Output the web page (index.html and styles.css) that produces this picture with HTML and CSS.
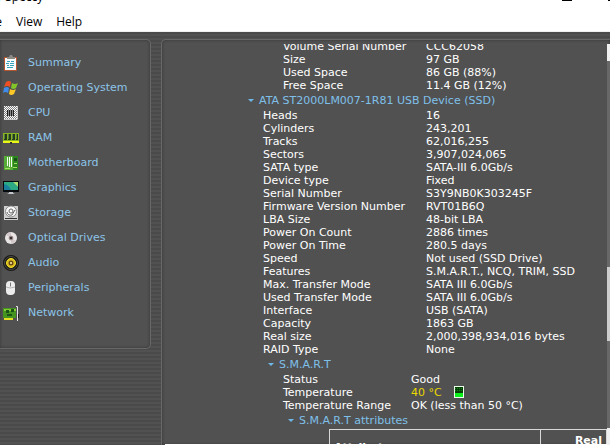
FILE: index.html
```html
<!DOCTYPE html>
<html lang="en">

<head>
    <meta charset="utf-8">
    <title>Speccy</title>
    <meta name="viewport" content="width=device-width, initial-scale=1">
    <link rel="stylesheet" href="styles.css">
</head>

<body>
    <header class="titlebar">
        <span class="title">y Speccy</span>
        <span class="window-controls"><i class="minimize"></i><i class="maximize"></i></span>
    </header>
    <nav class="menubar">
        <button type="button">File</button>
        <button type="button">View</button>
        <button type="button">Help</button>
    </nav>

    <div class="workspace">
        <nav class="panel sidebar">
            <a href="#summary">
                <svg viewBox="0 0 16 16">
                    <path d="M1 2h13v14H1z" fill="#b5552d" />
                    <path d="M2 3h11v12H2z" fill="#f6fafc" />
                    <path d="M4 2h2l1-2h2l1 2h2v2H4z" fill="#8b8b86" />
                    <path d="M4 6.500h3M8 6.500h3M3 8.500h3M7 8.500h4M4 10.500h2M7 10.500h4M4 12.500h6" stroke="#36a3bd" />
                </svg>
                Summary
            </a>
            <a href="#os">
                <svg viewBox="0 0 16 16">
                    <path d="M3 2q3-2 5 0L7 7Q4 5 1 7z" fill="#ee4f22" />
                    <path d="M9 3q3 2 6 0l-2 5q-3 2-5 0z" fill="#83c428" />
                    <path d="M1 8q3-2 5 0l-1 5q-3-2-5 0z" fill="#3f8de8" />
                    <path d="M7 9q3 2 6 0l-2 5q-3 2-5 0z" fill="#fcc827" />
                </svg>
                Operating System
            </a>
            <a href="#cpu">
                <svg viewBox="0 0 16 16">
                    <path d="M1 1h14v14H1z" fill="#808080" />
                    <path d="M1 1.500h13M1 3.500h13M1 5.500h13M1 7.500h13M1 9.500h13M1 11.500h13M1 13.500h13" stroke="#fff" stroke-dasharray="1 1" />
                    <path d="M2 2.500h12M2 4.500h12M2 6.500h12M2 8.500h12M2 10.500h12M2 12.500h12" stroke="#fff" stroke-dasharray="1 1" />
                    <path d="M4 5h7v6H4z" fill="#8a8a8a" />
                    <path d="M4.500 5v6M6.500 5v6M8.500 5v6M10.500 5v6" stroke="#222" />
                    <path d="M1 14.500h13M14.500 1v13" stroke="#c9c9c9" />
                </svg>
                CPU
            </a>
            <a href="#ram">
                <svg viewBox="0 0 16 16">
                    <path d="M0 3h16v8H0z" fill="#87b51f" />
                    <path d="M1 4h3v6H1zM5 4h3v6H5zM9 4h3v6H9zM13 4h2v6h-2z" fill="#263b19" />
                    <path d="M1.500 4v5M5.500 4v5M9.500 4v5M13.500 4v5" stroke="#587d48" />
                    <path d="M0 11h16v2H0z" fill="#eaf51b" />
                    <path d="M7 12h2v2H7z" fill="#333" />
                </svg>
                RAM
            </a>
            <a href="#motherboard">
                <svg viewBox="0 0 16 16">
                    <path d="M1 1h14v14H1z" fill="#2d8520" />
                    <path d="M1 1h9v14H1z" fill="#55ac37" />
                    <path d="M4.500 2v9M6.500 2v10M8.500 2v10" stroke="#f3ffed" />
                    <path d="M11 3h3v3h-3z" fill="#194e19" />
                    <path d="M2 13.500h5M11 8.500h3M10 12.500h4" stroke="#a8df61" />
                </svg>
                Motherboard
            </a>
            <a href="#graphics">
                <svg viewBox="0 0 16 16">
                    <path d="M0 1h16v11H0z" fill="#080b0d" />
                    <path d="M1 2h14v8H1z" fill="#187f9c" />
                    <path d="M1 2h8q3 1 6 6v2H8Q6 5 1 4z" fill="#2baa83" />
                    <path d="M10 2h5v5z" fill="#a5df70" />
                    <path d="M6 12h4v1l2 1H4l2-1z" fill="#c2c6ca" />
                </svg>
                Graphics
            </a>
            <a href="#storage">
                <svg viewBox="0 0 16 16">
                    <path d="M1 1h14v14H1z" fill="#cfcfcf" />
                    <path d="M2 13h12v1H2z" fill="#333" />
                    <circle cx="8" cy="6.500" r="5.500" fill="#f8f8f8" stroke="#8a8a8a" />
                    <circle cx="8" cy="6" r="2" fill="#fff" stroke="#666" />
                    <path d="M4 7q1 4 5 3l3-5" fill="none" stroke="#666" />
                </svg>
                Storage
            </a>
            <a href="#optical">
                <svg viewBox="0 0 16 16">
                    <circle cx="8" cy="8" r="6" fill="#e9e5e5" />
                    <path d="M8 8L3 5a6 6 0 0 1 5-3zM8 8l5 3a6 6 0 0 1-5 3z" fill="#d3c8cb" />
                    <circle cx="8" cy="8" r="2" fill="#3d3030" stroke="#aaa1a1" />
                </svg>
                Optical Drives
            </a>
            <a href="#audio">
                <svg viewBox="0 0 16 16">
                    <circle cx="8" cy="8" r="8" fill="#171717" />
                    <circle cx="8" cy="8" r="6.500" fill="none" stroke="#4d4d42" />
                    <circle cx="8" cy="8" r="4.500" fill="#d7bd20" stroke="#f4e02c" />
                    <circle cx="8" cy="8" r="2.500" fill="#6d4b16" />
                    <circle cx="8" cy="8" r="1" fill="#fff1a4" />
                </svg>
                Audio
            </a>
            <a href="#peripherals">
                <svg viewBox="0 0 16 16">
                    <rect x="3" y="1" width="9" height="14" rx="4" fill="#ededed" />
                    <path d="M3 7q4 2 9 0M7.500 2v5" fill="none" stroke="#b4b4b4" />
                    <path d="M7 3h1v3H7z" fill="#777" />
                </svg>
                Peripherals
            </a>
            <a href="#network">
                <svg viewBox="0 0 16 16">
                    <path d="M0 3h13v10H0z" fill="#45941f" />
                    <path d="M1 4h12v2H1z" fill="#82cb37" />
                    <path d="M3 5h3v3H3zM8 4h3v3H8zM4 9h5v2H4z" fill="#195117" />
                    <path d="M1 13h9v2H1z" fill="#e4df23" />
                    <path d="M14.500 16V1.500H13" fill="none" stroke="#e8e8e8" />
                    <path d="M15 9h1v4h-1z" fill="#222" />
                </svg>
                Network
            </a>
        </nav>

        <main class="panel content">
            <div class="report">
                <dl class="specs volume">
                    <dt>Volume Serial Number</dt><dd>CCC62058</dd>
                    <dt>Size</dt><dd>97 GB</dd>
                    <dt>Used Space</dt><dd>86 GB (88%)</dd>
                    <dt>Free Space</dt><dd>11.4 GB (12%)</dd>
                </dl>
                <section>
                    <button type="button" class="toggle">ATA ST2000LM007-1R81 USB Device (SSD)</button>
                    <dl class="specs drive">
                        <dt>Heads</dt><dd>16</dd>
                        <dt>Cylinders</dt><dd>243,201</dd>
                        <dt>Tracks</dt><dd>62,016,255</dd>
                        <dt>Sectors</dt><dd>3,907,024,065</dd>
                        <dt>SATA type</dt><dd>SATA-III 6.0Gb/s</dd>
                        <dt>Device type</dt><dd>Fixed</dd>
                        <dt>Serial Number</dt><dd>S3Y9NB0K303245F</dd>
                        <dt>Firmware Version Number</dt><dd>RVT01B6Q</dd>
                        <dt>LBA Size</dt><dd>48-bit LBA</dd>
                        <dt>Power On Count</dt><dd>2886 times</dd>
                        <dt>Power On Time</dt><dd>280.5 days</dd>
                        <dt>Speed</dt><dd>Not used (SSD Drive)</dd>
                        <dt>Features</dt><dd>S.M.A.R.T., NCQ, TRIM, SSD</dd>
                        <dt>Max. Transfer Mode</dt><dd>SATA III 6.0Gb/s</dd>
                        <dt>Used Transfer Mode</dt><dd>SATA III 6.0Gb/s</dd>
                        <dt>Interface</dt><dd>USB (SATA)</dd>
                        <dt>Capacity</dt><dd>1863 GB</dd>
                        <dt>Real size</dt><dd>2,000,398,934,016 bytes</dd>
                        <dt>RAID Type</dt><dd>None</dd>
                    </dl>
                    <section>
                        <button type="button" class="toggle">S.M.A.R.T</button>
                        <dl class="specs smart">
                            <dt>Status</dt><dd>Good</dd>
                            <dt>Temperature</dt>
                            <dd class="warm">40 °C
                                <svg class="gauge" viewBox="0 0 10 12">
                                    <path d="M0 0h10v12H0z" fill="#e8ffe8" />
                                    <path d="M1 1h8v6H1z" fill="#053f05" />
                                    <path d="M1 2.500h8M1 4.500h8" stroke="#12801a" stroke-dasharray="1 1" />
                                    <path d="M1 7h8v4H1z" fill="#0bf01b" />
                                </svg>
                            </dd>
                            <dt>Temperature Range</dt><dd>OK (less than 50 °C)</dd>
                        </dl>
                        <section>
                            <button type="button" class="toggle">S.M.A.R.T attributes</button>
                            <table class="attributes">
                                <thead>
                                    <tr>
                                        <th class="name">Attribute name</th>
                                        <th class="real">Real value</th>
                                    </tr>
                                </thead>
                            </table>
                        </section>
                    </section>
                </section>
            </div>
            <div class="scrollbar">
                <div class="arrow"></div>
                <div class="track"><div class="thumb"></div></div>
                <div class="arrow"></div>
            </div>
        </main>
    </div>
</body>

</html>
```

FILE: styles.css
```css
* {
    box-sizing: border-box;
}

html,
body {
    margin: 0;
    height: 100%;
    overflow: hidden;
}

body {
    display: flex;
    flex-direction: column;
    background: #fff;
    font-family: Verdana, "DejaVu Sans", sans-serif;
    font-size: 11px;
    line-height: 13px;
    color: #fff;
}

button {
    border: 0;
    padding: 0;
    background: none;
    font: inherit;
    color: inherit;
}

.titlebar,
.menubar {
    flex: none;
    display: flex;
    font-family: "Segoe UI", "Open Sans", sans-serif;
    font-size: 12px;
    color: #000;
}

.titlebar {
    height: 12px;
    justify-content: space-between;
}

.title {
    margin: -12px 0 0 -4px;
    line-height: 18px;
}

.window-controls {
    display: flex;
    gap: 36px;
}

.window-controls i {
    height: 1px;
    width: 10px;
    background: #000;
}

.window-controls .maximize {
    width: 2px;
}

.menubar {
    height: 20px;
    gap: 14px;
    margin-left: -17px;
    border-bottom: 1px solid #f0f0f0;
}

/* striped backdrop behind both panels */
.workspace {
    flex: 1;
    min-height: 0;
    display: flex;
    align-items: flex-start;
    gap: 10px;
    padding-top: 7px;
    background: repeating-linear-gradient(#4a4a4a 0 2px, #515151 2px 4px);
}

.panel {
    border: 1px solid #686868;
    background: #515151;
    box-shadow: inset 0 0 3px #333;
}

.sidebar {
    flex: none;
    width: 151px;
    padding: 10px 0 23px 3px;
    border-left: 0;
    border-radius: 0 5px 5px 0;
}

.sidebar a {
    display: flex;
    align-items: center;
    gap: 9px;
    height: 25px;
    color: #8cc4e8;
    text-decoration: none;
}

.sidebar svg {
    width: 16px;
    height: 16px;
}

.content {
    flex: 1;
    min-width: 0;
    height: 100%;
    display: flex;
    padding: 4px 0 0 3px;
    border-width: 1px 0 0 1px;
    border-radius: 5px 0 0 0;
}

.report {
    flex: 1;
    min-width: 0;
    padding-left: 82px;
    overflow: hidden;
    border-bottom: 1px solid #fff;
}

.report section section {
    padding-left: 20px;
}

.specs {
    display: grid;
    margin: 0;
    white-space: nowrap;
}

.specs dd {
    margin: 0;
}

/* scrolled partly out of view */
.volume {
    margin-top: -4px;
    padding-left: 36px;
    grid-template-columns: 143px 1fr;
}

.drive {
    padding-left: 16px;
    grid-template-columns: 163px 1fr;
}

.smart {
    padding-left: 16px;
    grid-template-columns: 128px 1fr;
}

.toggle {
    display: flex;
    align-items: center;
    gap: 4px;
    height: 17px;
    color: #7fc0ea;
    white-space: nowrap;
}

.toggle::before {
    content: "";
    margin: 0 1px;
    border: 3px solid transparent;
    border-top-color: #6fb9ea;
    border-bottom: 0;
}

.specs .warm {
    display: flex;
    gap: 12px;
    color: #e8d800;
}

.gauge {
    width: 10px;
    height: 12px;
}

.attributes {
    width: calc(100% - 42px);
    margin-left: 42px;
    border-collapse: collapse;
}

.attributes th {
    padding: 4px;
    border: 1px solid #d8d8d8;
}

.attributes .name {
    width: 76%;
    text-align: left;
}

.attributes .real {
    text-align: right;
}

.scrollbar {
    flex: none;
    width: 3px;
    display: flex;
    flex-direction: column;
}

.arrow {
    height: 17px;
    background: #f0f0f0;
}

.track {
    flex: 1;
    display: flex;
    flex-direction: column;
    justify-content: flex-end;
    padding-bottom: 87px;
    background: #686868;
}

.thumb {
    height: 74px;
    background: #cdcdcd;
}
```
